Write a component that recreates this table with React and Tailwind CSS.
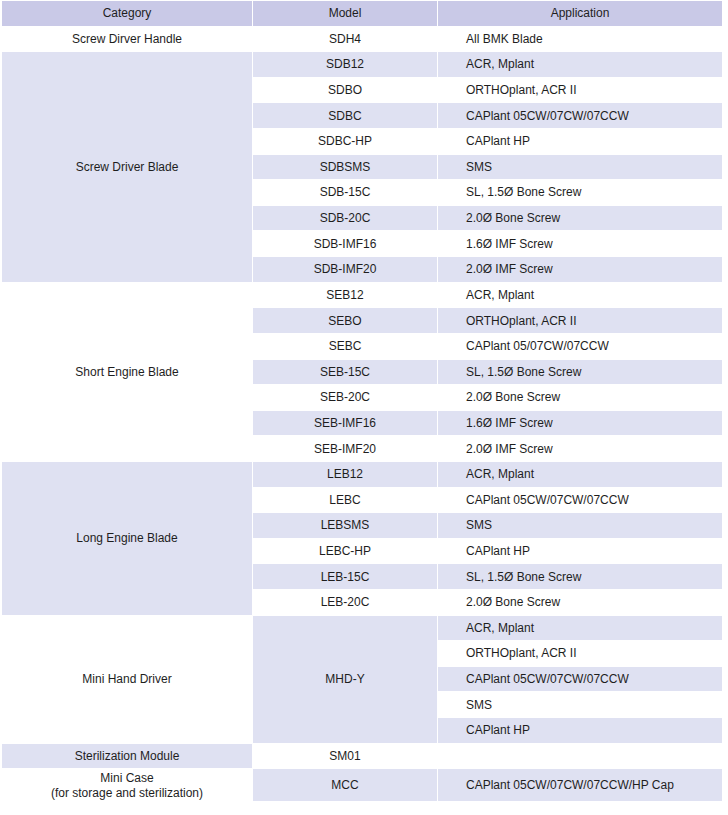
import React from "react";

const HEAD = "bg-[#c9c9e7]";
const LIGHT = "bg-[#dfe1f2]";

// category, rows of [model, application]
const GROUPS = [
  { cat: "Screw Dirver Handle", rows: [["SDH4", "All BMK Blade"]] },
  {
    cat: "Screw Driver Blade",
    rows: [
      ["SDB12", "ACR, Mplant"],
      ["SDBO", "ORTHOplant, ACR II"],
      ["SDBC", "CAPlant 05CW/07CW/07CCW"],
      ["SDBC-HP", "CAPlant HP"],
      ["SDBSMS", "SMS"],
      ["SDB-15C", "SL, 1.5Ø Bone Screw"],
      ["SDB-20C", "2.0Ø Bone Screw"],
      ["SDB-IMF16", "1.6Ø IMF Screw"],
      ["SDB-IMF20", "2.0Ø IMF Screw"],
    ],
  },
  {
    cat: "Short Engine Blade",
    rows: [
      ["SEB12", "ACR, Mplant"],
      ["SEBO", "ORTHOplant, ACR II"],
      ["SEBC", "CAPlant 05/07CW/07CCW"],
      ["SEB-15C", "SL, 1.5Ø Bone Screw"],
      ["SEB-20C", "2.0Ø Bone Screw"],
      ["SEB-IMF16", "1.6Ø IMF Screw"],
      ["SEB-IMF20", "2.0Ø IMF Screw"],
    ],
  },
  {
    cat: "Long Engine Blade",
    rows: [
      ["LEB12", "ACR, Mplant"],
      ["LEBC", "CAPlant 05CW/07CW/07CCW"],
      ["LEBSMS", "SMS"],
      ["LEBC-HP", "CAPlant HP"],
      ["LEB-15C", "SL, 1.5Ø Bone Screw"],
      ["LEB-20C", "2.0Ø Bone Screw"],
    ],
  },
];

const SPAN = { 1: "row-span-1", 5: "row-span-5", 6: "row-span-6", 7: "row-span-7", 9: "row-span-9" };

function Cell({ children, className = "", left }) {
  return (
    <div
      className={`flex items-center pt-px ${left ? "justify-start pl-[28px]" : "justify-center text-center"} ${className}`}
    >
      {children}
    </div>
  );
}

export default function App() {
  let row = 0;
  const cells = [];

  GROUPS.forEach((g, gi) => {
    const catBg = gi % 2 === 1 ? LIGHT : "bg-white";
    cells.push(
      <Cell key={`c${gi}`} className={`col-start-1 ${SPAN[g.rows.length]} ${catBg}`}>
        {g.cat}
      </Cell>
    );
    g.rows.forEach(([m, a], i) => {
      const bg = row % 2 === 1 ? LIGHT : "bg-white";
      cells.push(
        <Cell key={`m${gi}-${i}`} className={`col-start-2 ${bg}`}>{m}</Cell>,
        <Cell key={`a${gi}-${i}`} left className={`col-start-3 ${bg}`}>{a}</Cell>
      );
      row++;
    });
  });

  const mhd = ["ACR, Mplant", "ORTHOplant, ACR II", "CAPlant 05CW/07CW/07CCW", "SMS", "CAPlant HP"];

  return (
    <div
      className="w-[728px] h-[815px] bg-white pl-[2px] pt-[1px] text-[12px] text-[#1e1e1e] leading-[1.1]"
      style={{ fontFamily: '"Liberation Sans", Arial, sans-serif' }}
    >
      <div className="grid grid-cols-[250px_184px_284px] grid-rows-[repeat(30,24.62px)_32px] gap-px">
        <Cell className={`col-start-1 ${HEAD}`}>Category</Cell>
        <Cell className={`col-start-2 ${HEAD}`}>Model</Cell>
        <Cell className={`col-start-3 ${HEAD}`}>Application</Cell>

        {cells}

        <Cell className="col-start-1 row-span-5 bg-white">Mini Hand Driver</Cell>
        <Cell className={`col-start-2 row-span-5 ${LIGHT}`}>MHD-Y</Cell>
        {mhd.map((a, i) => (
          <Cell key={`h${i}`} left className={`col-start-3 ${i % 2 === 0 ? LIGHT : "bg-white"}`}>
            {a}
          </Cell>
        ))}

        <Cell className={`col-start-1 ${LIGHT}`}>Sterilization Module</Cell>
        <Cell className="col-start-2 bg-white">SM01</Cell>
        <Cell left className="col-start-3 bg-white"></Cell>

        <Cell className="col-start-1 bg-white leading-[15px]">
          <div className="pt-px">
            Mini Case
            <br />
            (for storage and sterilization)
          </div>
        </Cell>
        <Cell className={`col-start-2 ${LIGHT}`}>MCC</Cell>
        <Cell left className={`col-start-3 ${LIGHT}`}>CAPlant 05CW/07CW/07CCW/HP Cap</Cell>
      </div>
    </div>
  );
}
